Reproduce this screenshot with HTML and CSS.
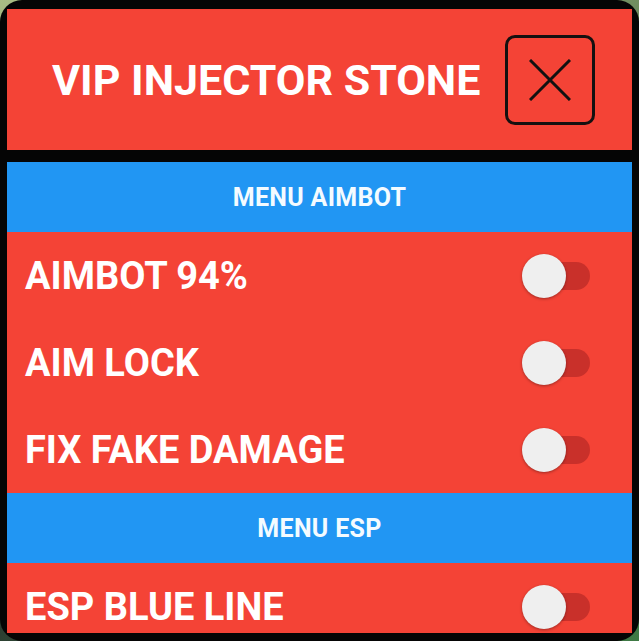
FILE: index.html
```html
<!DOCTYPE html>
<html>
<head>
  <meta charset="utf-8">
  <link rel="stylesheet" href="styles.css">
</head>
<body>
  <div class="mod-frame">
    <div class="mod-header">
      <h1 class="mod-title">VIP INJECTOR STONE</h1>
      <button class="close-btn" aria-label="Close">
        <svg width="42" height="42" viewBox="0 0 42 42">
          <path d="M1 1 L41 41 M41 1 L1 41" stroke="#111" stroke-width="3" fill="none"/>
        </svg>
      </button>
    </div>

    <div class="mod-list">
      <div class="section-title">MENU AIMBOT</div>

      <div class="mod-row">
        <span class="mod-label">AIMBOT 94%</span>
        <span class="switch"><span class="switch-track"></span><span class="switch-thumb"></span></span>
      </div>
      <div class="mod-row">
        <span class="mod-label">AIM LOCK</span>
        <span class="switch"><span class="switch-track"></span><span class="switch-thumb"></span></span>
      </div>
      <div class="mod-row">
        <span class="mod-label">FIX FAKE DAMAGE</span>
        <span class="switch"><span class="switch-track"></span><span class="switch-thumb"></span></span>
      </div>

      <div class="section-title">MENU ESP</div>

      <div class="mod-row">
        <span class="mod-label">ESP BLUE LINE</span>
        <span class="switch"><span class="switch-track"></span><span class="switch-thumb"></span></span>
      </div>
    </div>
  </div>
</body>
</html>
```

FILE: styles.css
```css
html, body {
  margin: 0;
  height: 100%;
}

body {
  font-family: Roboto, "Liberation Sans", Arial, sans-serif;
  background: linear-gradient(160deg, #a9bd84 0%, #5f7f55 35%, #2a3a30 70%, #3f7a45 100%);
  overflow: hidden;
}

/* Black floating window */
.mod-frame {
  box-sizing: border-box;
  height: 641px;
  background: #050505;
  border-radius: 22px;
  padding: 9px 7px 8px 7px;
  display: flex;
  flex-direction: column;
}

.mod-header {
  height: 141px;
  flex-shrink: 0;
  background: #f44336;
  display: flex;
  align-items: center;
  justify-content: space-between;
  padding: 0 37px 0 45px;
  margin-bottom: 12px;
}

.mod-title {
  margin: 0;
  color: #fff;
  font-size: 43px;
  font-weight: 700;
}

.close-btn {
  width: 90px;
  height: 90px;
  box-sizing: border-box;
  border: 3px solid #141010;
  border-radius: 10px;
  background: transparent;
  padding: 0;
  display: flex;
  align-items: center;
  justify-content: center;
  cursor: pointer;
}

/* Scrolling list of options */
.mod-list {
  flex: 1;
  overflow: hidden;
  background: #f44336;
}

.section-title {
  height: 70px;
  background: #2196f3;
  color: #f4fbff;
  font-size: 25px;
  font-weight: 700;
  letter-spacing: 0.3px;
  display: flex;
  align-items: center;
  justify-content: center;
}

.mod-row {
  height: 87px;
  display: flex;
  align-items: center;
  justify-content: space-between;
  padding: 0 42px 0 18px;
}

.mod-label {
  color: #fff;
  font-size: 38px;
  font-weight: 700;
}

/* Material style switch, off state */
.switch {
  position: relative;
  width: 68px;
  height: 44px;
}

.switch-track {
  position: absolute;
  left: 8px;
  right: 0;
  top: 8px;
  height: 28px;
  border-radius: 14px;
  background: #c9302a;
}

.switch-thumb {
  position: absolute;
  left: 0;
  top: 0;
  width: 44px;
  height: 44px;
  border-radius: 50%;
  background: #efefef;
  box-shadow: 0 1px 3px rgba(0, 0, 0, 0.35);
}
```
